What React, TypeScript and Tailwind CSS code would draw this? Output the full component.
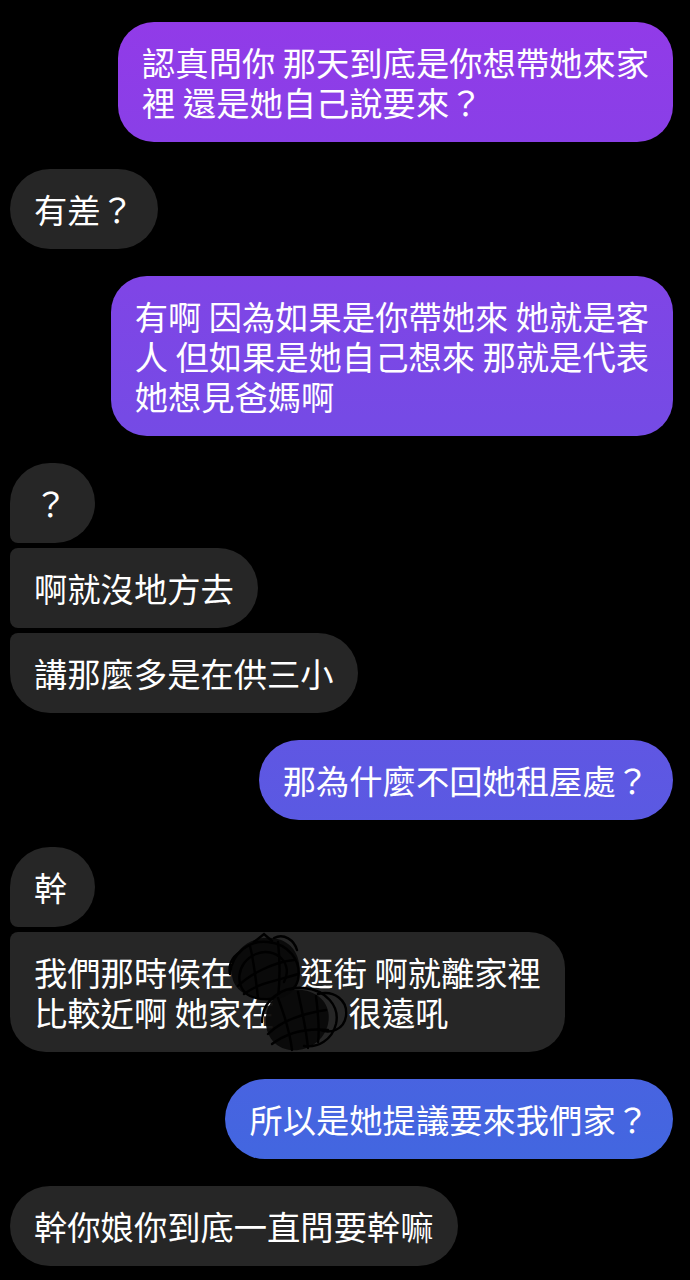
import { Fragment, type ReactNode } from 'react';

const font = {
  fontFamily: '"Noto Sans CJK TC", "Noto Sans CJK SC", "Noto Sans", sans-serif',
};

function Bubble({
  lines,
  className,
  children,
}: {
  lines: string[];
  className: string;
  children?: ReactNode;
}) {
  return (
    <div
      className={`relative w-fit min-w-[85px] px-6 py-5 text-[33.3px] leading-[40px] text-white whitespace-pre ${className}`}
    >
      <p>
        {lines.map((line, i) => (
          <Fragment key={i}>
            {i > 0 && <br />}
            {line}
          </Fragment>
        ))}
      </p>
      {children}
    </div>
  );
}

// black marker scribble hiding the place names
function Scribble() {
  return (
    <svg
      className="absolute left-[210px] top-0 pointer-events-none"
      width="150"
      height="122"
      viewBox="0 0 150 122"
      fill="none"
    >
      <path
        d="M12 36 C14 16 32 4 52 6 C72 8 82 24 79 44 C76 62 58 70 40 67 C22 64 10 54 12 36 Z"
        fill="#080808"
        opacity="0.95"
      />
      <g stroke="#000" strokeWidth="2.4" strokeLinecap="round">
        <path d="M10 42 C12 20 30 8 48 10 C68 12 82 28 78 48 C74 64 50 72 30 64 C14 56 16 30 36 22 C56 14 74 32 64 50" />
        <path d="M34 10 L44 2 L52 9" />
        <path d="M54 6 C64 1 74 8 77 18" />
        <path d="M20 20 C12 25 8 33 10 42" />
        <path d="M18 54 C30 42 54 30 74 28" />
        <path d="M24 62 C40 50 60 48 78 42" />
        <path d="M30 14 C34 30 36 48 38 66" />
        <path d="M58 10 C60 28 60 48 58 66" />
      </g>
      <path
        d="M46 84 C48 66 64 56 82 58 C100 60 112 74 108 92 C104 110 86 120 70 118 C54 116 44 102 46 84 Z"
        fill="#080808"
        opacity="0.95"
      />
      <g stroke="#000" strokeWidth="2.4" strokeLinecap="round">
        <path d="M42 90 C42 68 62 54 84 56 C106 58 120 74 116 92 C112 108 98 116 84 114" />
        <path d="M98 62 C114 58 128 68 126 84 C124 98 110 102 100 98" />
        <path d="M48 102 C60 90 80 82 106 78" />
        <path d="M52 112 C68 100 88 96 108 98" />
        <path d="M58 66 C64 82 70 100 72 118" />
        <path d="M78 60 C82 78 86 96 88 116" />
        <path d="M96 64 C98 80 100 96 98 110" />
      </g>
    </svg>
  );
}

export default function App() {
  return (
    <div className="h-[1280px] overflow-hidden bg-black" style={font}>
      <div className="flex flex-col pt-[22px]">
        <Bubble
          lines={['認真問你 那天到底是你想帶她來家', '裡 還是她自己說要來？']}
          className="self-end mr-[17px] rounded-[36px] bg-fixed bg-linear-to-b/srgb from-[#933ae8] to-[#3a6bdf]"
        />

        <Bubble
          lines={['有差？']}
          className="self-start ml-[10px] mt-[27px] rounded-[40px] bg-[#262626]"
        />

        <Bubble
          lines={['有啊 因為如果是你帶她來 她就是客', '人 但如果是她自己想來 那就是代表', '她想見爸媽啊']}
          className="self-end mr-[17px] mt-[27px] rounded-[36px] bg-fixed bg-linear-to-b/srgb from-[#933ae8] to-[#3a6bdf]"
        />

        <Bubble
          lines={['？']}
          className="self-start ml-[10px] mt-[27px] rounded-[40px] rounded-bl-[8px] bg-[#262626]"
        />
        <Bubble
          lines={['啊就沒地方去']}
          className="self-start ml-[10px] mt-[5px] rounded-[40px] rounded-l-[8px] bg-[#262626]"
        />
        <Bubble
          lines={['講那麼多是在供三小']}
          className="self-start ml-[10px] mt-[5px] rounded-[40px] rounded-tl-[8px] bg-[#262626]"
        />

        <Bubble
          lines={['那為什麼不回她租屋處？']}
          className="self-end mr-[17px] mt-[27px] rounded-[40px] bg-fixed bg-linear-to-b/srgb from-[#933ae8] to-[#3a6bdf]"
        />

        <Bubble
          lines={['幹']}
          className="self-start ml-[10px] mt-[27px] rounded-[40px] rounded-bl-[8px] bg-[#262626]"
        />
        <Bubble
          lines={['我們那時候在　　逛街 啊就離家裡', '比較近啊 她家在　　 很遠吼']}
          className="self-start ml-[10px] mt-[5px] rounded-[36px] rounded-tl-[8px] bg-[#262626]"
        >
          <Scribble />
        </Bubble>

        <Bubble
          lines={['所以是她提議要來我們家？']}
          className="self-end mr-[17px] mt-[27px] rounded-[40px] bg-fixed bg-linear-to-b/srgb from-[#933ae8] to-[#3a6bdf]"
        />

        <Bubble
          lines={['幹你娘你到底一直問要幹嘛']}
          className="self-start ml-[10px] mt-[27px] rounded-[40px] bg-[#262626]"
        />
      </div>
    </div>
  );
}
